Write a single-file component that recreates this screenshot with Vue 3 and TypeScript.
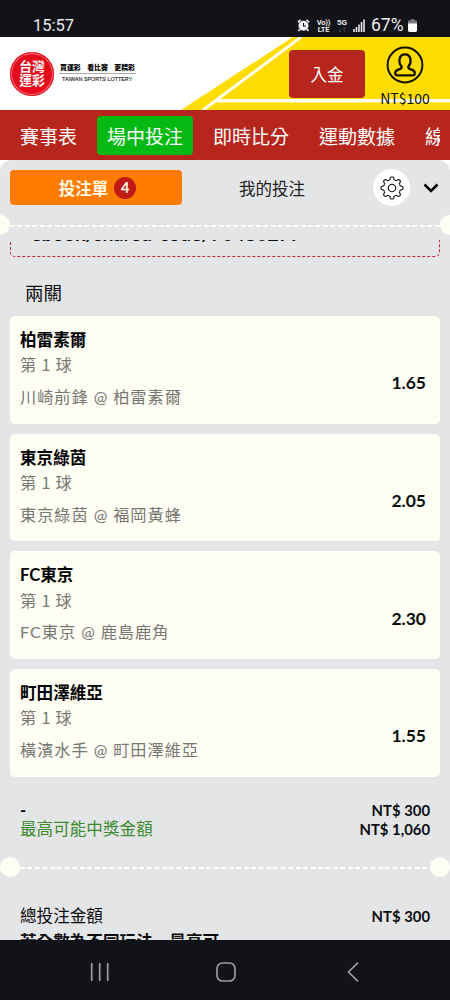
<script setup lang="ts">
interface Bet {
  pick: string
  market: string
  match: string
  odds: string
}

const menu = ['賽事表', '場中投注', '即時比分', '運動數據', '線上投注']
const activeMenu = '場中投注'

const bets: Bet[] = [
  { pick: '柏雷素爾', market: '第 1 球', match: '川崎前鋒 @ 柏雷素爾', odds: '1.65' },
  { pick: '東京綠茵', market: '第 1 球', match: '東京綠茵 @ 福岡黃蜂', odds: '2.05' },
  { pick: 'FC東京', market: '第 1 球', match: 'FC東京 @ 鹿島鹿角', odds: '2.30' },
  { pick: '町田澤維亞', market: '第 1 球', match: '橫濱水手 @ 町田澤維亞', odds: '1.55' },
]

// Outline of a gear with eight rounded teeth
const gearPath = (() => {
  const pts: string[] = []
  for (let i = 0; i < 160; i++) {
    const a = (i * Math.PI) / 80
    const r = 9.7 + 1.3 * Math.tanh(2.6 * Math.cos(8 * a) - 0.3)
    pts.push(`${(12 + r * Math.sin(a)).toFixed(2)} ${(12 - r * Math.cos(a)).toFixed(2)}`)
  }
  return `M${pts.join('L')}Z`
})()
</script>

<template>
  <div class="phone">
    <div class="status">
      <span class="clock">15:57</span>
      <div class="indicators">
        <svg class="alarm" viewBox="0 0 14 14">
          <path d="M1 3.6 3.8 1M13 3.6 10.2 1M3 11l-1.4 2M11 11l1.4 2" stroke="#f2f2f4" stroke-width="1.7" fill="none" />
          <circle cx="7" cy="7.3" r="5.4" fill="#f2f2f4" />
          <path d="M7 4.2v3.4h2.6" stroke="#121318" stroke-width="1.2" fill="none" />
        </svg>
        <span class="tiny volte">Vo))<br />LTE</span>
        <span class="tiny fiveg">5G<br /><i>↓↑</i></span>
        <svg class="signal" viewBox="0 0 12 13">
          <path d="M1 10v3M3.5 8v5M6 5.5V13M8.5 3v10M11 .5V13" stroke="#e9e9ec" stroke-width="1.6" />
        </svg>
        <span class="percent">67%</span>
        <svg class="battery" viewBox="0 0 9 13">
          <path d="M3 0h3v1.3h1.6Q9 1.3 9 2.7V5H0V2.7Q0 1.3 1.4 1.3H3Z" fill="#77787c" />
          <path d="M0 4.6h9v7Q9 13 7.6 13H1.4Q0 13 0 11.6Z" fill="#fff" />
        </svg>
      </div>
    </div>

    <header class="header">
      <svg class="backdrop" viewBox="0 0 450 73">
        <path d="M293 0H450V73H181Z" fill="#ffdd00" />
        <path d="M301 0 203 73" stroke="#fffef0" stroke-width="3" />
        <path d="M215 63.8H450" stroke="#fffef0" stroke-width="3.5" />
      </svg>
      <div class="brand">
        <div class="seal"><span>台灣</span><span>運彩</span></div>
        <div class="slogan">
          <div class="slogan-zh"><span>買運彩</span><span>看比賽</span><span>更精彩</span></div>
          <div class="slogan-en">TAIWAN SPORTS LOTTERY</div>
        </div>
      </div>
      <div class="account">
        <button class="deposit">入金</button>
        <div class="user">
          <svg class="avatar" viewBox="0 0 38 38" fill="none" stroke="#151300">
            <circle cx="19" cy="19" r="17.4" stroke-width="2" />
            <path d="M15.600 20.400C12.400 17.300 12.300 8.400 19 8.400S25.600 17.300 22.400 20.400C22 22.200 23.200 22.900 25.300 23.500C28.400 24.500 29 26 28.700 27.800Q28.600 29.400 26.800 29.400H11.200Q9.400 29.400 9.300 27.800C9 26 9.600 24.500 12.700 23.500C14.800 22.900 16 22.200 15.600 20.400Z" stroke-width="2.400" />
          </svg>
          <span class="balance">NT$100</span>
        </div>
      </div>
    </header>

    <nav class="menu">
      <div class="menu-track">
        <a v-for="item in menu" :key="item" class="menu-item" :class="{ active: item === activeMenu }">{{ item }}</a>
      </div>
    </nav>

    <main class="panel-wrap">
      <section class="panel">
        <div class="tabs">
          <button class="tab current">投注單<span class="count">4</span></button>
          <button class="tab">我的投注</button>
          <div class="gear">
            <svg viewBox="0 0 24 24" fill="none" stroke="#222" stroke-width="1.15" stroke-linejoin="round">
              <path :d="gearPath" />
              <circle cx="12" cy="12" r="3.7" />
            </svg>
          </div>
          <svg class="chevron" viewBox="0 0 16 10"><path d="M1.500 1.500 8 8l6.500-6.500" fill="none" stroke="#000" stroke-width="2.500" /></svg>
        </div>

        <div class="perforation outer"><i></i><b></b><i></i></div>

        <div class="scroll">
          <div class="share"><span>ebook/shared-code/70480277</span></div>
          <h2 class="group">兩關</h2>
          <div class="bets">
            <article v-for="bet in bets" :key="bet.pick" class="bet">
              <div class="bet-info">
                <div class="pick">{{ bet.pick }}</div>
                <div class="market">{{ bet.market }}</div>
                <div class="match">{{ bet.match }}</div>
              </div>
              <div class="odds">{{ bet.odds }}</div>
            </article>
          </div>
          <div class="sums">
            <div class="row"><span class="dash">-</span><strong>NT$ 300</strong></div>
            <div class="row"><span class="win">最高可能中獎金額</span><strong>NT$ 1,060</strong></div>
          </div>
          <div class="perforation inner"><i></i><b></b><i></i></div>
          <div class="total row"><span>總投注金額</span><strong>NT$ 300</strong></div>
          <div class="note">若全數為不同玩法<span class="comma">，</span>最高可</div>
        </div>
      </section>
    </main>

    <footer class="system">
      <svg class="recents" viewBox="0 0 20 20"><path d="M1.700 1v18M9.700 1v18M17.700 1v18" stroke="#9b9ca0" stroke-width="1.700" /></svg>
      <svg class="home" viewBox="0 0 20 20"><rect x="1" y="1" width="18" height="18" rx="5.500" fill="none" stroke="#9b9ca0" stroke-width="1.700" /></svg>
      <svg class="back" viewBox="0 0 12 20"><path d="M11 .7 1.500 10 11 19.300" fill="none" stroke="#9b9ca0" stroke-width="1.700" /></svg>
    </footer>
  </div>
</template>

<style>
body {
  margin: 0;
  overflow: hidden;
}
</style>

<style scoped>
.phone {
  display: flex;
  flex-direction: column;
  width: 450px;
  height: 1000px;
  overflow: hidden;
  background: #fff;
  color: #0d0d0f;
  font-family: Lato, "Noto Sans CJK TC", sans-serif;
}
svg {
  display: block;
  flex: none;
}
button {
  border: 0;
  padding: 0;
  background: none;
  font: inherit;
  color: inherit;
}
.status {
  flex: none;
  box-sizing: border-box;
  height: 37px;
  padding: 14px 33px 0;
  display: flex;
  justify-content: space-between;
  background: #121318;
  color: #ececef;
  font-family: Roboto, sans-serif;
}
.clock {
  font-size: 16.500px;
  line-height: 23px;
}
.indicators {
  display: flex;
  align-items: center;
  height: 23px;
}
.alarm {
  width: 13px;
  height: 13px;
}
.tiny {
  font-size: 7.500px;
  line-height: 7px;
  font-weight: 700;
  text-align: center;
}
.tiny i {
  font-style: normal;
  color: #77787c;
}
.volte {
  width: 15px;
  margin-left: 6px;
  letter-spacing: -0.200px;
}
.fiveg {
  width: 12px;
  margin-left: 5px;
  font-size: 8px;
}
.signal {
  width: 12px;
  height: 13px;
  margin-left: 5px;
}
.percent {
  width: 34px;
  margin: 0 3px 0 6px;
  font-size: 17.500px;
  line-height: 23px;
  white-space: nowrap;
}
.battery {
  width: 9px;
  height: 13px;
}
.header {
  position: relative;
  flex: none;
  height: 73px;
  display: flex;
  justify-content: space-between;
  background: #fff;
}
.backdrop {
  position: absolute;
  inset: 0;
  width: 450px;
  height: 73px;
}
.brand,
.account {
  position: relative;
  display: flex;
}
.brand {
  padding-left: 10px;
}
.seal {
  box-sizing: border-box;
  width: 44px;
  height: 44px;
  margin-top: 14.500px;
  border-radius: 50%;
  background: #e60b1c;
  box-shadow: inset 0 0 0 1.300px #e60b1c, inset 0 0 0 1.900px #f7a5a5;
  color: #fff;
  display: flex;
  flex-direction: column;
  align-items: center;
  justify-content: center;
  font-size: 12.800px;
  line-height: 13.200px;
  font-weight: 700;
}
.slogan {
  width: 77px;
  margin: 24px 0 0 5px;
}
.slogan-zh {
  display: flex;
  justify-content: space-between;
  padding: 0 1px;
  height: 12px;
  border-bottom: 1px solid #aaa;
  font-size: 6.900px;
  line-height: 13px;
  font-weight: 900;
  color: #000;
}
.slogan-en {
  padding-left: 3px;
  font-family: "Liberation Sans", sans-serif;
  font-size: 5.300px;
  line-height: 10px;
  color: #111;
  white-space: nowrap;
  letter-spacing: 0.060px;
  -webkit-text-stroke: 0.100px #111;
}
.deposit {
  width: 76px;
  height: 48px;
  margin: 13px 12px 0 0;
  border-radius: 4px;
  background: #b7261d;
  color: #fff;
  font-size: 16.500px;
}
.user {
  width: 56px;
  margin-right: 17px;
  display: flex;
  flex-direction: column;
  align-items: center;
}
.avatar {
  width: 38px;
  height: 38px;
  margin-top: 9px;
}
.balance {
  margin-top: 4px;
  font-family: "Noto Sans CJK TC", sans-serif;
  font-size: 14px;
  line-height: 20px;
}
.menu {
  flex: none;
  height: 50px;
  padding: 0 10px;
  background: #b7261d;
}
.menu-track {
  display: flex;
  gap: 10px;
  height: 50px;
  align-items: center;
  overflow: hidden;
}
.menu-item {
  flex: none;
  padding: 0 10px;
  height: 39px;
  line-height: 42px;
  border-radius: 4px;
  color: #fff;
  font-size: 19px;
}
.menu-item.active {
  background: #04b912;
}
.panel-wrap {
  flex: none;
  height: 780px;
  background: #fff;
}
.panel {
  height: 780px;
  display: flex;
  flex-direction: column;
  overflow: hidden;
  border-radius: 12px 12px 0 0;
  background: #e4e5e7;
}
.tabs {
  display: flex;
  align-items: center;
  height: 55px;
  padding: 0 11px 0 10px;
}
.tab {
  width: 180px;
  height: 35px;
  font-size: 16.500px;
  color: #222;
}
.tab.current {
  display: flex;
  align-items: center;
  justify-content: center;
  gap: 6px;
  width: 172px;
  padding-left: 3px;
  box-sizing: border-box;
  border-radius: 4px;
  background: #ff7c00;
  color: #fffbe8;
  font-weight: 700;
}
.count {
  width: 22px;
  height: 22px;
  border-radius: 50%;
  background: #c01a16;
  font-size: 14.500px;
  line-height: 22px;
}
.gear {
  display: flex;
  align-items: center;
  justify-content: center;
  width: 37px;
  height: 37px;
  margin-left: 11px;
  border-radius: 50%;
  background: #fff;
}
.gear svg {
  width: 24px;
  height: 24px;
}
.chevron {
  width: 16px;
  height: 10px;
  margin-left: 13px;
}
.perforation {
  display: flex;
  align-items: center;
  height: 20px;
}
.perforation i {
  flex: none;
  width: 20px;
  height: 20px;
  border-radius: 50%;
  background: #fffef5;
}
.perforation b {
  flex: 1;
  height: 2.500px;
  margin-top: 2px;
  background: repeating-linear-gradient(90deg, #fffef5 0 5px, transparent 5px 7.450px);
}
.outer {
  margin: 0 -10px;
  flex: none;
}
.scroll {
  flex: 1;
  min-height: 0;
  margin-top: 5px;
  overflow: hidden;
}
.share {
  box-sizing: border-box;
  height: 60px;
  margin: -43px 10px 0;
  padding: 22px 0 0 20px;
  border: 1.500px dashed #c5283a;
  border-radius: 5px;
  font-size: 19.600px;
  line-height: 28px;
  font-weight: 700;
}
.group {
  margin: 20px 0 0 25px;
  font-size: 18.500px;
  line-height: 32px;
  font-weight: 400;
}
.bets {
  display: flex;
  flex-direction: column;
  gap: 10px;
  margin: 7px 10px 0;
}
.bet {
  box-sizing: border-box;
  height: 107.700px;
  padding: 12px 14px 0 10px;
  display: flex;
  justify-content: space-between;
  border-radius: 5px;
  background: #fffef5;
}
.pick {
  font-size: 16.600px;
  line-height: 25px;
  font-weight: 700;
  color: #000;
}
.market,
.match {
  font-size: 16.200px;
  line-height: 25px;
  color: #777773;
  letter-spacing: 0.800px;
}
.market {
  margin-top: -0.600px;
  font-family: "Noto Sans CJK TC", sans-serif;
}
.match {
  margin-top: 6.600px;
  letter-spacing: 0.950px;
}
.odds {
  margin-top: 42.200px;
  font-size: 17.500px;
  line-height: 25px;
  font-weight: 700;
}
.sums {
  margin: 24px 20px 0;
}
.row {
  display: flex;
  justify-content: space-between;
  height: 19px;
  line-height: 19px;
  font-size: 16.600px;
}
.row strong {
  font-size: 14.850px;
}
.dash {
  font-weight: 700;
}
.win {
  color: #3d8a31;
}
.inner {
  margin-top: 18px;
}
.total {
  margin: 30px 20px 0;
}
.note {
  margin: 3px 20px 0;
  font-size: 16.600px;
  line-height: 25px;
  font-weight: 700;
}
.comma {
  font-family: "Noto Sans CJK SC", sans-serif;
}
.system {
  flex: none;
  box-sizing: border-box;
  height: 60px;
  padding: 3px 91px 0 90px;
  display: flex;
  align-items: center;
  justify-content: space-between;
  background: #121318;
}
.recents,
.home {
  width: 20px;
  height: 20px;
}
.home {
  margin-right: 5px;
}
.back {
  width: 12px;
  height: 20px;
}
</style>
